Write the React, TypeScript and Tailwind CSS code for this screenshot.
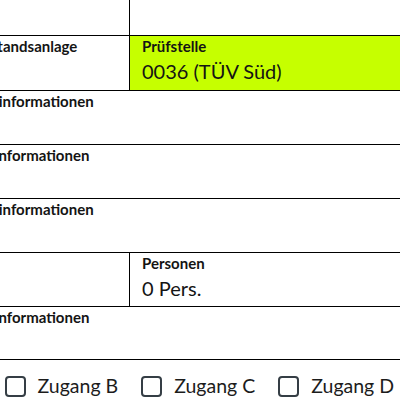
import React from "react";

function Cell({
    label,
    value,
    className = "",
    labelClass = "",
}: {
    label?: string;
    value?: string;
    className?: string;
    labelClass?: string;
}) {
    return (
        <div className={`pl-3 pt-[1px] overflow-hidden ${className}`}>
            <div className={`text-[15px] leading-[18px] font-bold whitespace-nowrap ${labelClass}`}>{label}</div>
            {value && <div className="mt-[5px] text-[20px] leading-[22px] whitespace-nowrap">{value}</div>}
        </div>
    );
}

function Zugang({ name }: { name: string }) {
    return (
        <label className="flex items-center gap-3 shrink-0">
            <span className="w-[21px] h-[21px] rounded-[4px] border-2 border-[#353e45] bg-white" />
            <span className="text-[19.5px] leading-6 text-[#1c1c1c]">{name}</span>
        </label>
    );
}

export default function App() {
    return (
        <div className="w-[400px] h-[400px] overflow-hidden bg-white font-['Lato',sans-serif] text-[#141414]">
            <div className="-ml-[36px] w-[640px] -mt-[66px]">
                {/* top row */}
                <div className="grid grid-cols-[166px_1fr] h-[102px] border-b border-black">
                    <Cell label="Baujahr" className="border-r border-black" />
                    <div className="pl-3 -mt-[1px]">
                        <div className="text-[15px] leading-[18px] font-bold whitespace-nowrap">Standort</div>
                        <div className="mt-[5px] text-[20px] leading-[22px] whitespace-nowrap">Hauptgebäude</div>
                        <div className="text-[20px] leading-[22px] whitespace-nowrap">Tiefgarage</div>
                    </div>
                </div>

                <div className="grid grid-cols-[166px_1fr] h-[55px] border-b border-black">
                    <Cell label="Bestandsanlage" labelClass="-ml-[3px]" className="border-r border-black" />
                    <Cell label="Prüfstelle" value="0036 (TÜV Süd)" className="bg-[#c6ff00]" />
                </div>

                <div className="h-[54px] border-b border-black">
                    <Cell label="Zusatzinformationen" labelClass="-ml-[21px]" />
                </div>
                <div className="h-[54px] border-b border-black">
                    <Cell label="Notrufinformationen" labelClass="-ml-[26px]" />
                </div>
                <div className="h-[54px] border-b border-black">
                    <Cell label="Zusatzinformationen" labelClass="-ml-[21px]" />
                </div>

                <div className="grid grid-cols-[166px_1fr] h-[54px] border-b border-black">
                    <Cell className="border-r border-black" />
                    <Cell label="Personen" value="0 Pers." />
                </div>

                <div className="h-[53px] border-b border-black">
                    <Cell label="Notrufinformationen" labelClass="-ml-[26px]" />
                </div>

                <div className="flex items-center gap-[23px] mt-[14px] -ml-[96px]">
                    <Zugang name="Zugang A" />
                    <Zugang name="Zugang B" />
                    <Zugang name="Zugang C" />
                    <Zugang name="Zugang D" />
                </div>
            </div>
        </div>
    );
}
